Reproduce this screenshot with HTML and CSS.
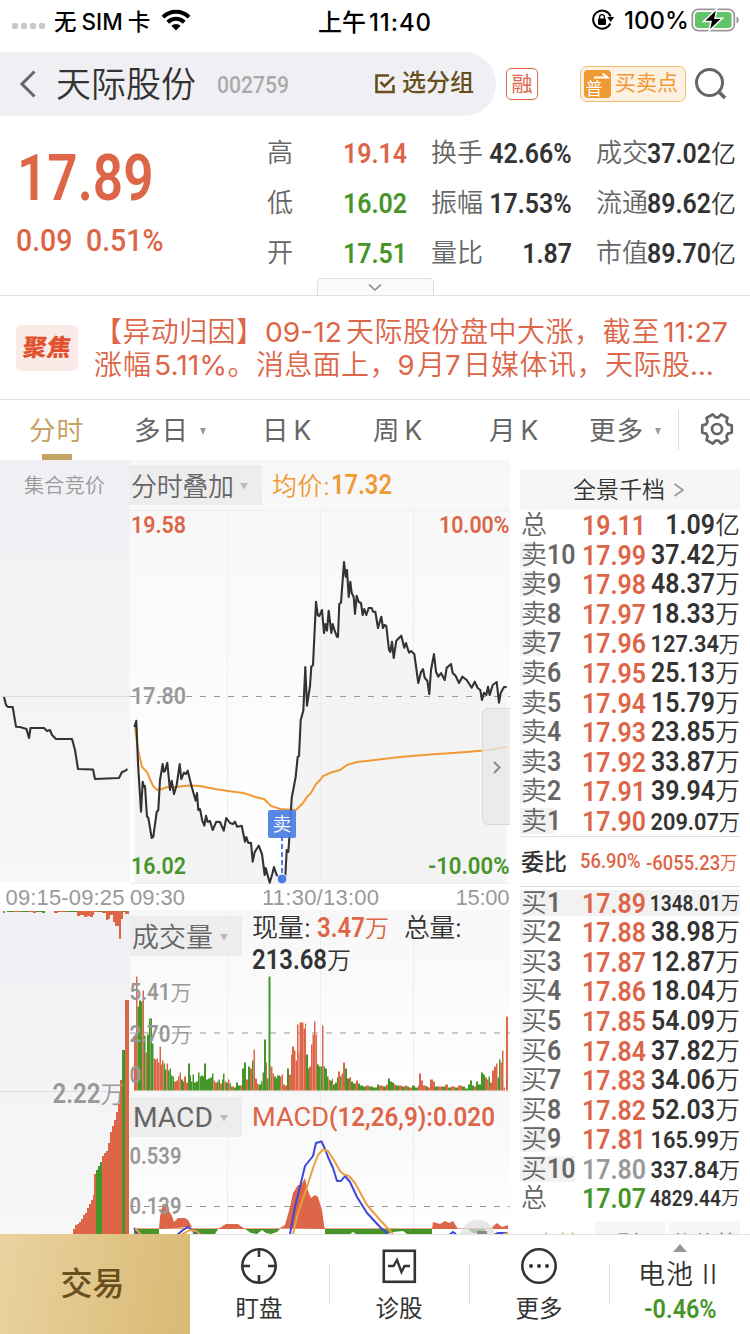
FILE: index.html
```html
<!DOCTYPE html>
<html lang="zh-CN">
<head>
<meta charset="utf-8">
<title>天际股份 002759</title>
<link rel="stylesheet" href="styles.css">
</head>
<body>
<div class="status">
  <svg class="signal" width="36" height="8" viewBox="0 0 36 8"><g fill="#c8c8c8"><rect x="1" y="1" width="6" height="6" rx="2"/><rect x="10" y="1" width="6" height="6" rx="2"/><rect x="19" y="1" width="6" height="6" rx="2"/><rect x="28" y="1" width="6" height="6" rx="2"/></g></svg>
  <span class="carrier">无<b>SIM</b>卡</span>
  <svg class="wifi" width="30" height="22" viewBox="0 0 30 22"><g fill="none" stroke="#000" stroke-width="4"><path d="M2 8.2a18.500 18.500 0 0 1 26 0"/><path d="M6.800 13.2a11.700 11.700 0 0 1 16.400 0"/></g><path d="M10.3 16.8a6.8 6.8 0 0 1 9.4 0L15 21.5z"/></svg>
  <span class="clock">上午<b>11:40</b></span>
  <svg class="rotlock" width="24" height="22" viewBox="0 0 24 22"><path d="M19.3 14.5A9 9 0 1 1 19.6 7.500" fill="none" stroke="#000" stroke-width="2"/><path d="M16.200 8h7l-3.600 5z"/><rect x="7" y="9.500" width="8" height="6.500" rx="1"/><path d="M8.600 10V8a2.400 2.400 0 0 1 4.800 0v2" fill="none" stroke="#000" stroke-width="1.400"/></svg>
  <span class="pct">100%</span>
  <svg class="battery" width="50" height="26" viewBox="0 0 50 26"><rect x="1.300" y="2.300" width="42" height="21.400" rx="6" fill="#fff" stroke="#999" stroke-width="1.800"/><rect x="4" y="5" width="36.600" height="16" rx="3.500" fill="#62c466"/><path d="M45.500 9.500c3 1 3 6 0 7z" fill="#999"/><path d="M26 1.500 12.500 14.500h7.500L18 24l13.500-12.700H24z" fill="#000" stroke="#fff" stroke-width="1.500"/></svg>
</div>

<header class="header">
  <div class="name-pill">
    <svg class="back" width="18" height="30" viewBox="0 0 18 30"><path d="M15.500 2.500 3 15l12.500 12.500" fill="none" stroke="#666" stroke-width="3"/></svg>
    <span class="name">天际股份</span>
    <span class="code"><i class="num">002759</i></span>
    <svg class="check" width="22" height="22" viewBox="0 0 22 22"><path d="M15 2.500H2.500v16.500h17V12M6.500 9l4 4.200L20 4" fill="none" stroke="#67501e" stroke-width="2.600"/></svg>
    <span class="group">选分组</span>
  </div>
  <span class="rong">融</span>
  <span class="points">
    <svg width="27" height="28" viewBox="0 0 27 28"><rect width="27" height="28" rx="4" fill="#f09a35"/><path d="M10 7.500h13.500L18.500 3.500" fill="none" stroke="#fff" stroke-width="2"/><text x="1.500" y="25" class="pu">普</text></svg>
    <span>买卖点</span>
  </span>
  <svg class="search" width="34" height="34" viewBox="0 0 34 34"><circle cx="15.500" cy="15.500" r="13" fill="none" stroke="#666" stroke-width="3"/><path d="M24.500 24.500l6.500 6.500" stroke="#666" stroke-width="3.600"/></svg>
</header>

<section class="quote">
  <div class="last">
    <div class="price"><i class="num">17.89</i></div>
    <div class="change"><i class="num">0.09</i><i class="num">0.51%</i></div>
  </div>
  <div class="stats">
    <span>高</span><em class="red"><i class="num">19.14</i></em><span>换手</span><em><i class="num">42.66%</i></em><span>成交</span><em><i class="num">37.02</i><u>亿</u></em>
    <span>低</span><em class="green"><i class="num">16.02</i></em><span>振幅</span><em><i class="num">17.53%</i></em><span>流通</span><em><i class="num">89.62</i><u>亿</u></em>
    <span>开</span><em class="green"><i class="num">17.51</i></em><span>量比</span><em><i class="num">1.87</i></em><span>市值</span><em><i class="num">89.70</i><u>亿</u></em>
  </div>
  <div class="expand"><svg width="16" height="9" viewBox="0 0 16 9"><path d="M2 1.500l6 5.500 6-5.500" fill="none" stroke="#888" stroke-width="1.600"/></svg></div>
</section>

<section class="news">
  <span class="focus"><b>聚焦</b></span>
  <div class="headline">
    <svg width="640" height="66" viewBox="95 315 640 66">
      <text x="94" y="342" textLength="170">【异动归因】</text><text class="lat" x="265" y="341.500" textLength="77" lengthAdjust="spacingAndGlyphs">09-12</text><text x="346" y="342" textLength="256">天际股份盘中大涨，</text><text x="602.500" y="342" textLength="57">截至</text><text class="lat" x="663" y="341.500" textLength="65" lengthAdjust="spacingAndGlyphs">11:27</text>
      <text x="94" y="375" textLength="57">涨幅</text><text class="lat" x="154" y="374.500" textLength="73" lengthAdjust="spacingAndGlyphs">5.11%</text><text x="227.500" y="375" textLength="170">。消息面上，</text><text class="lat" x="397.500" y="374.500">9</text><text x="417" y="375">月</text><text class="lat" x="445" y="374.500">7</text><text x="463" y="375">日</text><text x="491" y="375" textLength="199">媒体讯，天际股</text><text class="lat" x="690" y="375" textLength="27">…</text>
    </svg>
  </div>
</section>

<nav class="tabs">
  <span class="on">分时</span><span class="t2">多日<s></s></span><span class="t3">日<b>K</b></span><span class="t4">周<b>K</b></span><span class="t5">月<b>K</b></span><span class="t6">更多<s></s></span>
  <span class="gear"><svg width="36" height="36" viewBox="-18 -18 36 36"><g fill="none" stroke="#666" stroke-width="2.700" stroke-linejoin="round"><circle r="5"/><path id="cog"/></g></svg></span>
</nav>

<main class="main">
  <svg class="charts" width="510" height="774" viewBox="0 460 510 774">
    <defs>
      <linearGradient id="ga" x1="0" y1="0" x2="0" y2="1"><stop offset="0" stop-color="#f0f0f4"/><stop offset="1" stop-color="#f7f7f8"/></linearGradient>
      <linearGradient id="gb" x1="0" y1="0" x2="0" y2="1"><stop offset="0" stop-color="#f7f7f7"/><stop offset="1" stop-color="#fff"/></linearGradient>
    </defs>
    <rect x="0" y="460" width="130" height="422" fill="url(#ga)"/>
    <rect x="0" y="911" width="130" height="323" fill="url(#ga)"/>
    <rect x="130" y="460" width="380" height="423" fill="url(#gb)"/>
    <rect x="130" y="910" width="380" height="181" fill="url(#gb)"/>
    <rect x="130" y="1092" width="380" height="142" fill="url(#gb)"/>
    <path id="area" fill="#f4f4f4"/>
    <path d="M227.500 510v373m0 28v323M320.500 510v373m0 28v323M413.500 510v373m0 28v323M130 510.500h380M130 883.500h380M130 1091.500h380" stroke="#eeeeef" fill="none"/>
    <path d="M0 696.500h130M0 1091.500h130" stroke="#dedee0" fill="none"/>
    <path d="M130 696.500h380M130 1206.500h380" stroke="#999" stroke-dasharray="6 8" fill="none"/>
    <path d="M130 1033h380" stroke="#bbb" stroke-width="1.500" stroke-dasharray="6 8" fill="none"/>
    <rect x="130" y="465" width="132" height="40" fill="#ededee"/>
    <rect x="130" y="916" width="112" height="40" fill="#ededee"/>
    <rect x="130" y="1097" width="112" height="40" fill="#ededee"/>
    <path d="M240 483h8l-4 6.500zM220 934h8l-4 6.500zM220 1115h8l-4 6.500z" fill="#bbb"/>
    <g class="cjk">
      <text x="24" y="492.500" font-size="20" fill="#999" textLength="81">集合竞价</text>
      <text x="131" y="496" font-size="26" fill="#666" textLength="103">分时叠加</text>
      <text x="132" y="947" font-size="27" fill="#666" textLength="81">成交量</text>
      <text x="272" y="495" font-size="25" fill="#f09a35" textLength="58">均价:</text>
      <text x="252" y="936.500" font-size="26" fill="#333" textLength="59">现量:</text>
      <text x="404" y="936.500" font-size="26" fill="#333" textLength="58">总量:</text>
      <text x="365" y="937" font-size="24" fill="#dd6548">万</text>
      <text x="327" y="969" font-size="24" fill="#333">万</text>
    </g>

    <polyline class="line" points="4,697 6,705 8,707 12.700,707 16,726.700 20,727 26.500,729 29,738 30.500,728 44,728 47,731 50,730 52,735 56,739 72,739 75,750 78,769 93,769.500 95,779 119,778 122,772 125,771 127.500,769"/>
    <polyline class="avg" points="135,727 138,750 142,767 147,772 153,786 157,790 162,789 167,787 175,787 190,785.500 200,786 215,789 228,791 243,793 250,795 255,797 264,799 271,806 280,809 296,810 303,803 307,797 311,793 316,784 320,780 323,776 331,772.500 340,770 347,765 357,762 375,760 400,757 430,754.500 460,752.500 490,750 506.700,746.700"/>
    <polyline id="price" class="line" points="134.5,727 136.300,720.700 138,763 141,811.700 142.700,781.700 144,787 145,786 147,816.700 148.300,817.700 151.700,838 153.300,836.700 156.700,812 158.300,810 160,780 162.700,764 163.700,771.700 165,771 167.300,762.700 170,790 171.700,780.700 174,794 176.700,785 179.700,764 181.300,779 184,772.700 186,774 187.700,770.700 191.700,786.700 195.700,800.700 197,793 198.300,810 200,809 202.300,820.700 204.300,825.700 206,815.700 207.700,822 210,821 212.700,830 216.300,821.700 220,822 223.700,830.700 226.300,818 230,823 233,824 235,821.700 237,826.700 241.700,825.700 245,841.700 246.300,837 248.300,843 251,842.700 252.700,861.700 254.700,852 258.700,845.700 262,854 264.700,875 265.700,868 269.700,882.700 272.300,874 274,867 276.700,875 281.700,880 285.300,876.700 286.700,850 288.300,852 289.300,838 291.700,798 295.700,776.700 297.700,756.700 299,756 300.700,720 303.300,710.700 305.300,667 307,705.700 310,686 311.300,666.700 313,665 316,601.700 317.700,615 319.300,616 322,610 324,633 325.300,624 327,630.700 328.700,610.700 331.300,633 332.700,624 334.700,630.700 337,637 338,636.700 339.300,604 341,602.700 344,562 345.700,576.700 347,570 348.700,597 350.300,581.700 351.700,593 353.700,597 355,614 356.700,595.700 358.700,602 361,603 362.700,615 364.300,609 366.300,615 368.700,608 371.700,608 373,611.700 375.300,611.700 378,628 381.300,616.700 383,628 384.300,625 386.300,626 389,650 390.300,652 392,641.700 393.700,658 396.300,640.700 401.300,635.700 404.300,647.700 406,643 409,652.700 411,651 414.300,654 418.300,683 421,672 423,669 424.700,677.700 427.300,680.700 429.300,694 431,670 434,654 436,671.700 438.300,676.700 441,673 444.700,680 446.700,667.700 451,664 452.700,673 455.700,676 459,683 462.300,676.700 466.700,680 471.700,687.700 474.700,681.700 477.700,688 480.300,690 482,700 484,692.700 486.300,695 488,686.700 489.700,695 492.700,685 496.700,682 499,702.700 500.700,693 504,687 506.700,687"/>

    <path d="M282 836v44" stroke="#4a7ee3" stroke-width="2" stroke-dasharray="5 3"/>
    <circle cx="282" cy="879" r="5" fill="#4a7ee3" stroke="#fff"/>
    <rect x="268" y="810" width="28" height="28" rx="2" fill="#4a7ee3" opacity=".92"/>
    <text class="cjk" x="272.500" y="831" font-size="19" fill="#fff">卖</text>
    <path d="M511 708.500h-23a5.500 5.500 0 0 0-5.500 5.500v104.500a6 6 0 0 0 5.500 6h23" fill="#e8e8e8" fill-opacity=".8" stroke="#d9d9d9"/>
    <path d="M494 762l5.500 5.500-5.500 5.500" fill="none" stroke="#888" stroke-width="2"/>

    <g id="auction"></g>
    <g id="volume"></g>

    <path d="M134 1229h25v5h-25zM192 1229h26l-3 5h-22zM245 1229h35l-3 3-6 2-5-1-4-3-5 4-6-1zM325 1229h107v5h-25l-4-3-10 1-6 2h-31l-3-2-3 2h-25zM468 1229h18l-5 4h-8z" fill="#469529"/>
    <path d="M159 1229l1-12 1-5 2-7h5l1 6 3 5 2 6 4-4h7l3 2 4 7zM218 1229l8-5h12l7 5zM280 1228l5-3 5-18 3-14 5-8h3l4-7 2 10 4 10 4-3 3 2 4 13 2 15 1 4zM432 1229l1-7 7 2 5-3 4 2 4-2 5 8zM490 1229l7-6 5 4 6-2v4z" fill="#dd6548"/>
    <path d="M134 1228.500h374" stroke="#dd6548" stroke-width=".6"/>
    <circle cx="478" cy="1238" r="18" fill="#ddd" opacity=".7"/><path d="M477 1231h10v4h-10z" fill="#888"/>
    <g fill="none" stroke-width="2" stroke-linejoin="round">
      <path stroke="#3d46d8" d="M290 1234l5-27 10-41 8-10 3-13 5.500-1.500 3.500 7.500 3 8 5 11 4 13h4l4-5 5 6 7 15 10 16 13 14 8 7M134 1228l4 7M177 1235l6-5 5-3 6 4 6 4M449 1235l4-3 3 2M494 1235l4-2h9"/>
      <path stroke="#e8a040" d="M293 1234l5-21 9-26 6-19 5-13 5-5.500 5 1.500 7 11 5 9 4 3.500 5 1.500 6 7 12 22 13 15 13 14M135 1228l6 7M181 1235l9-5 6 1 5 4M502 1235l6-2"/>
    </g>

    <g class="din">
      <g font-size="24">
        <text x="131" y="533" fill="#dd6548" textLength="55" lengthAdjust="spacingAndGlyphs">19.58</text>
        <text x="439" y="533" fill="#dd6548" textLength="70.500" lengthAdjust="spacingAndGlyphs">10.00%</text>
        <text x="131" y="704" fill="#999" textLength="55" lengthAdjust="spacingAndGlyphs">17.80</text>
        <text x="131" y="874" fill="#469529" textLength="55" lengthAdjust="spacingAndGlyphs">16.02</text>
        <text x="428" y="874" fill="#469529" textLength="81.500" lengthAdjust="spacingAndGlyphs">-10.00%</text>
      </g>
      <text x="331" y="494" font-size="27" fill="#f09a35" textLength="61" lengthAdjust="spacingAndGlyphs">17.32</text>
      <text x="317" y="936.500" font-size="27" fill="#dd6548" textLength="48" lengthAdjust="spacingAndGlyphs">3.47</text>
      <text x="252" y="968.500" font-size="27" fill="#333" textLength="75" lengthAdjust="spacingAndGlyphs">213.68</text>
      <text x="252" y="1125.500" font-size="26" fill="#dd6548" class="lt" textLength="77" lengthAdjust="spacingAndGlyphs">MACD</text>
      <text x="329" y="1125.500" font-size="26" fill="#dd6548" textLength="166" lengthAdjust="spacingAndGlyphs">(12,26,9):0.020</text>
      <text x="133" y="1126.500" font-size="27" fill="#666" class="lt" textLength="80" lengthAdjust="spacingAndGlyphs">MACD</text>
      <g fill="#999" font-size="24">
        <text x="129.500" y="1000" textLength="41" lengthAdjust="spacingAndGlyphs">5.41</text>
        <text x="129.500" y="1042" textLength="41" lengthAdjust="spacingAndGlyphs">2.70</text>
        <text x="129.500" y="1083" textLength="12" lengthAdjust="spacingAndGlyphs">0</text>
        <text x="129.500" y="1163.500" textLength="52" lengthAdjust="spacingAndGlyphs">0.539</text>
        <text x="129.500" y="1213.500" textLength="52" lengthAdjust="spacingAndGlyphs">0.139</text>
        <text x="52.500" y="1103" font-size="27" textLength="48" lengthAdjust="spacingAndGlyphs">2.22</text>
      </g>
    </g>
    <g class="cjk" fill="#999"><text x="170.500" y="1000" font-size="21">万</text><text x="170.500" y="1042" font-size="21">万</text><text x="100.500" y="1103" font-size="24">万</text></g>
    <g class="axis"><text x="5.500" y="904.500" textLength="119">09:15-09:25</text><text x="130" y="904.500" textLength="55">09:30</text><text x="262" y="904.500" textLength="117">11:30/13:00</text><text x="455.500" y="904.500" textLength="54">15:00</text></g>
  </svg>

  <aside class="book">
    <div class="depth">全景千档<svg width="12" height="16" viewBox="0 0 12 16"><path d="M1.500 2l8.500 6-8.500 6" fill="none" stroke="#999" stroke-width="1.700"/></svg></div>
    <div class="rows" id="sell"></div>
    <div class="ratio"><b>委比</b><i class="num">56.90%</i><i class="num amt">-6055.23<u>万</u></i></div>
    <div class="rows" id="buy"></div>
    <div class="subtabs"><span class="sel">十档</span><span>明细</span><span>分价格</span></div>
  </aside>
</main>

<footer class="footer">
  <div class="trade">交易</div>
  <div class="item"><svg width="38" height="38" viewBox="0 0 38 38"><g fill="none" stroke="#333" stroke-width="2.600"><circle cx="19" cy="19" r="16.700"/><path d="M19 2v8M19 28v8M2 19h8M28 19h8"/></g></svg><span>盯盘</span></div>
  <div class="item"><svg width="38" height="38" viewBox="0 0 38 38"><g fill="none" stroke="#333" stroke-width="2.600"><rect x="3.800" y="3.800" width="31" height="31"/><path d="M8 19h5.500l3.500-6 4.500 12 3-6H30" stroke-width="2.400"/></g></svg><span>诊股</span></div>
  <div class="item"><svg width="38" height="38" viewBox="0 0 38 38"><circle cx="19" cy="19" r="16.700" fill="none" stroke="#333" stroke-width="2.600"/><g fill="#333"><circle cx="11" cy="19" r="2"/><circle cx="19" cy="19" r="2"/><circle cx="27" cy="19" r="2"/></g></svg><span>更多</span></div>
  <div class="item sector"><svg width="14" height="8" viewBox="0 0 14 8"><path d="M0 8L7 0l7 8z" fill="#999"/></svg><span>电池 <b>II</b></span><em class="green"><i class="num">-0.46%</i></em></div>
</footer>
<script src="app.js"></script>
</body>
</html>
```

FILE: styles.css
```css
* { box-sizing: border-box; }
body {
  margin: 0; width: 750px; height: 1334px; overflow: hidden; background: #fff;
  display: flex; flex-direction: column; color: #333;
  font-family: Inter, "Noto Sans CJK SC", sans-serif; font-weight: 350;
}
svg { display: block; flex: none; }
em, i { font-style: normal; }
u, s { text-decoration: none; }
.red { color: #dd6548; }
.green { color: #469529; }
.num { font-family: Roboto, "Noto Sans CJK SC", sans-serif; font-weight: 600; display: inline-block; flex: none; transform: scaleX(.89); transform-origin: left center; }

.status { height: 40px; flex: none; display: flex; align-items: center; color: #000; padding-left: 11px; }
.signal { margin-top: 12px; }
.carrier { margin-left: 7px; font-size: 22.5px; font-weight: 500; width: 99px; white-space: nowrap; }
.carrier b { font-weight: 450; margin: 0 5px; }
.wifi { margin-left: 8px; }
.clock { width: 114px; margin-left: 127px; font-size: 24px; font-weight: 500; white-space: nowrap; }
.clock b { font-weight: 450; margin-left: 3px; letter-spacing: .9px; }
.rotlock { margin-left: 159px; }
.pct { margin-left: 9px; width: 66px; font-size: 24px; font-weight: 450; }
.battery { margin-left: 1px; }

.header { height: 64px; margin-top: 12px; flex: none; display: flex; align-items: center; }
.name-pill { width: 496px; height: 64px; border-radius: 0 32px 32px 0; background: #f0f0f4; display: flex; align-items: center; padding-left: 19px; }
.name { margin-left: 19px; font-size: 35px; width: 141px; line-height: 62px; }
.code { margin-left: 20px; width: 78px; font-size: 24px; color: #aaa; }
.code .num { font-weight: 500; transform: scaleX(.88); }
.check { margin-left: 79px; }
.group { margin-left: 6px; font-size: 24px; font-weight: 500; color: #67501e; line-height: 60px; margin-top: -2px; }
.rong { margin-left: 10px; width: 32px; height: 32px; border: 1.5px solid #dd6548; border-radius: 5px; color: #dd6548; font-size: 21px; line-height: 30px; text-align: center; font-weight: 400; }
.points { margin-left: 42px; width: 106px; height: 36px; border: 1.5px solid #f3bc6e; border-radius: 7px; background: #fdf1e2; display: flex; align-items: center; padding-left: 3px; gap: 4px; font-size: 21px; line-height: 32px; font-weight: 400; color: #f09a35; }
.points span { margin-top: -2px; }
.pu { font-size: 17px; fill: #fff; font-weight: 400; }
.search { margin-left: 8px; }

.quote { height: 180px; flex: none; border-bottom: 1px solid #e0e0e0; display: flex; position: relative; }
.last { width: 267px; padding-left: 16px; color: #dd6548; }
.price { height: 97px; padding-top: 25px; padding-left: 1px; font-size: 64px; line-height: 72px; }
.price .num { transform: scaleX(.83); }
.change { height: 54px; line-height: 54px; display: flex; }
.change .num { width: 70px; font-size: 32px; font-weight: 500; transform: scaleX(.89); white-space: nowrap; }
.stats { display: grid; grid-template-columns: 52px 88px 52px 89px 52px 88px; grid-template-rows: repeat(3, 50px); padding-top: 12px; font-size: 26px; line-height: 50px; color: #666; white-space: nowrap; }
.stats span:nth-child(6n+3) { margin-left: 24px; }
.stats span:nth-child(6n+5) { margin-left: 48px; }
.stats em { font-size: 28px; text-align: right; }
.stats em:not(.red):not(.green) { color: #333; }
.stats em .num { transform-origin: right center; }
.stats em:nth-child(6n+4) { margin-right: -24px; }
.stats em:nth-child(6n+6) { margin-right: -48px; }
.stats u { font-size: 25px; }
.expand { position: absolute; left: 316.5px; bottom: 0; width: 117px; height: 17px; border: 1px solid #ddd; border-bottom: 0; border-radius: 5px 5px 0 0; background: #fafafa; display: flex; justify-content: center; padding-top: 4px; }

.news { height: 104px; flex: none; border-bottom: 1px solid #e0e0e0; display: flex; padding-left: 16px; align-items: center; }
.focus { width: 62px; height: 46px; margin-right: 17px; border-radius: 5px; background: #fbebe8; color: #e0512f; font-size: 24px; line-height: 45px; text-align: center; }
.focus b { font-weight: 900; display: inline-block; transform: skewX(-8deg); }
.headline text { font-size: 28px; fill: #dd6548; font-weight: 350; }
.headline .lat { font-weight: 400; font-size: 27.5px; }

.tabs { height: 60px; flex: none; display: grid; grid-template-columns: 134px 128px 111px 116px 100px 89px 72px; align-items: center; color: #666; font-size: 26.500px; line-height: 61px; letter-spacing: 1px; font-weight: 400; }
.tabs b { font-weight: 400; margin-left: 4px; }
.tabs span { height: 60px; }
.tabs .on { padding-left: 29px; color: #c5a363; background: linear-gradient(#c5a363, #c5a363) 42px 54px / 30px 6px no-repeat; }
.tabs s { display: inline-block; margin-left: 11px; vertical-align: 5px; border: 3.5px solid transparent; border-top: 7px solid #999; border-bottom: 0; }
.tabs .gear { padding: 11px 0 0 21px; background: linear-gradient(#ddd, #ddd) 0 10px / 1px 40px no-repeat; }

.main { height: 774px; flex: none; display: flex; overflow: hidden; }
.charts text { font-weight: 350; }
.charts .din text { font-family: Roboto, sans-serif; font-weight: 600; }
.charts .din .lt { font-weight: 400; }
.charts .axis text { font-family: "Liberation Sans", Arial, sans-serif; font-weight: 400; font-size: 22px; fill: #999; }
.line { fill: none; stroke: #333; stroke-width: 2.1; stroke-linejoin: round; }
.avg { fill: none; stroke: #f09a35; stroke-width: 2; }

.book { width: 220px; margin-left: 10px; padding-top: 10px; }
.depth { height: 40px; background: #f6f6f7; font-size: 23px; line-height: 42px; display: flex; justify-content: center; align-items: center; gap: 8px; padding-right: 2px; }
.row { height: 29.6px; display: flex; line-height: 30.6px; font-size: 28px; background: linear-gradient(#f2f2f3, #f2f2f3) 0 2px no-repeat; white-space: nowrap; }
.row .lv { width: 62px; flex: none; padding-left: 1px; color: #666; font-size: 26px; display: flex; }
.row .lv .num { font-size: 28px; }
.row .pr { width: 65px; flex: none; }
.row .vol { width: 93px; flex: none; display: flex; justify-content: flex-end; }
.row .vol .num { transform-origin: right center; }
.row .vol u { font-size: .88em; }
.ratio { height: 51px; margin-bottom: 1px; border-top: 1px solid #ddd; border-bottom: 1px solid #ddd; display: flex; align-items: center; color: #dd6548; font-size: 20px; white-space: nowrap; }
.ratio b { font-weight: 500; font-size: 23px; color: #333; width: 60px; padding-left: 1px; margin-top: -2px; }
.ratio .num { width: 66px; transform: scaleX(.92); font-weight: 500; }
.ratio .amt { width: 90px; }
.ratio u { font-weight: 350; font-size: 19px; }
.subtabs { display: grid; grid-template-columns: 75px 70px 71px; text-align: center; height: 46px; margin-top: 9px; font-size: 23px; line-height: 45px; color: #666; }
.subtabs span { background: #f6f6f7; }
.subtabs span:last-child { margin-left: 4px; margin-right: -4px; }
.subtabs .sel { background: none; color: #c5a363; }

.footer { height: 100px; flex: none; display: flex; background: #fff; }
.trade { width: 190px; background: linear-gradient(100deg, #ead3a0, #d9b973); color: #67501e; font-size: 32px; font-weight: 500; text-align: center; line-height: 100px; padding-right: 5px; }
.item { width: 140px; border-top: 1px solid #e0e0e0; padding: 12px 2px 0 0; display: flex; flex-direction: column; align-items: center; font-size: 23.5px; line-height: 34px; background: linear-gradient(#ddd, #ddd) right 29px / 1px 40px no-repeat; font-weight: 400; }
.item span { margin-top: 7px; white-space: nowrap; }
.sector { background: none; padding-top: 9px; padding-right: 4px; font-weight: 350; }
.sector svg { margin-left: 4px; }
.sector span { font-size: 27px; line-height: 34px; margin-top: 6px; letter-spacing: .8px; }
.sector b { font-weight: 350; }
.sector em { font-size: 26px; line-height: 34px; margin-top: 0; margin-left: 4px; }
.sector .num { transform-origin: center; transform: scaleX(.9); }
```

FILE: app.js
```js
const RED = '#dd6548', GREEN = '#469529';
const $ = id => document.getElementById(id);

// Volume bars: x, height, colour; each bar extends to the next x.
const volume = '134r54 136r114 137.5g84 139g90 141g89 142.5r100 144g55 145.5r38 147g56 149g72 150.5g72 152g47 153.5r32 155r31 156.5r32 158r28 159.5r44 161r26 162r30 163.5g27 165g21 166.5r27 168g20 169.5g22 171g15 172.5g14 174r9 176r10 178r14 179.5r18 181g11 183g9 184r14 186r8 188g27 190g15 191g9 192.5g16 194g8 196g9 198g18 199.5g14 201g15 203g14 204g27 206g11 208g12 210g13 212g17 213.5r10 215r8 217g9 218.5g11 220r7 222g11 223g17 224.5r9 226g8 228r11 229.5g7 231r4 234g3 236g8 238g5 240r5 242g22 244g28 246r11 248g24 250r22 252g30 253.5r41 255r12 257r7 258.5g6 261g9 262.5g18 264g51 266r28 267g12 268.5g114 270.5r24 272.5r17 274g14 276g12 277g15 280r14 281.5r16 283r6 285r5 287g22 289r16 291r36 292r44 294r40 295.5r30 297r66 298.5r38 299.5r68 302r68 303.5r62 305r67 306g36 308g22 309r24 311r46 312.5r56 314r69 315.5r56 317g26 319g24 320.5g24 322r65 323.5g24 325g22 327g14 328.5r11 330g10 332r12 333g6 335g8 337g13 338r19 340g14 341.5r17 343r28 345g22 347g12 349r13 351g9 353g7 355r7 356r10 358g7 360g5 363g4 366r5 369g4 373g3 377g6 379r5 383g4 386r6 388g12 390g9 392g8 394r6 396g5 399r5 402g4 405r5 407g4 409r3 412g5 415g3 418r5 419r17 421r10 423r5 426g4 428r3 430r11 433r9 435g4 438r4 442g4 445r6 448g3 451r4 455g3 458r5 462g4 465g2 468g6 470g10 472g5 474r4 476g9 478g6 481g18 483g16 485r13 487r11 488.5g14 490r8 492r20 494r24 496r27 497.5g13 499g31 500.5r28 502r40 503.5r3 505r0 506r74 508r0';
const auction = '73r5 75r9 77r10 79r12 81r15 83r19 85r21 87r26 89r30 91r34 93r39 94r60 96g64 98g68 100g72 102r78 104r81 106r83 108r91 110r102 112r108 114r114 116r122 118r130 120r154 122g184 125r234 129r0';
const topBars = '3r2 5r0 7g1 14r1 21g1 28r1 33r2 36g1 42g2 45r0 54r2 58r1 66g1 77r5 80r4 84r6 87r5 90r6 93r4 94r1 98g1 102r2 106r9 108r8 110r4 113r11 115r15 117r15 119r28 121r8 123g1 125r3 129r0';

function bars(spec, base, down) {
  const d = spec.split(' ').map(s => s.match(/([\d.]+)([rg])([\d.]+)/).slice(1));
  return d.slice(0, -1).map(([x, c, h], i) =>
    `<rect x="${x}" y="${down ? base : base - h}" width="${d[i + 1][0] - x}" height="${h}" fill="${c === 'r' ? RED : GREEN}"/>`
  ).join('');
}
$('volume').innerHTML = bars(volume, 1090.5);
$('auction').innerHTML = bars(auction, 1234) + bars(topBars, 911, true);
$('area').setAttribute('d', 'M134.5 883L' + $('price').getAttribute('points') + ' 506.7 883Z');

// Six-toothed settings cog outline.
let cog = '';
for (let i = 0; i < 6; i++) {
  [[-.4, 11.8], [-.24, 15.2], [.24, 15.2], [.4, 11.8]].forEach(([a, r]) => {
    const t = i * Math.PI / 3 + a;
    cog += (cog ? 'L' : 'M') + (r * Math.cos(t)).toFixed(2) + ' ' + (r * Math.sin(t)).toFixed(2);
  });
}
$('cog').setAttribute('d', cog + 'Z');

// Order book rows: side, level, price, volume, unit, bar width, price colour.
const sell = [['总', '', '19.11', '1.09', '亿', 0], ['卖', 10, '17.99', '37.42', '万', 12], ['卖', 9, '17.98', '48.37', '万', 15], ['卖', 8, '17.97', '18.33', '万', 4], ['卖', 7, '17.96', '127.34', '万', 22], ['卖', 6, '17.95', '25.13', '万', 7], ['卖', 5, '17.94', '15.79', '万', 3], ['卖', 4, '17.93', '23.85', '万', 6], ['卖', 3, '17.92', '33.87', '万', 8], ['卖', 2, '17.91', '39.94', '万', 6], ['卖', 1, '17.90', '209.07', '万', 34]];
const buy = [['买', 1, '17.89', '1348.01', '万', 220], ['买', 2, '17.88', '38.98', '万', 7], ['买', 3, '17.87', '12.87', '万', 2], ['买', 4, '17.86', '18.04', '万', 3], ['买', 5, '17.85', '54.09', '万', 9], ['买', 6, '17.84', '37.82', '万', 6], ['买', 7, '17.83', '34.06', '万', 5], ['买', 8, '17.82', '52.03', '万', 9], ['买', 9, '17.81', '165.99', '万', 27], ['买', 10, '17.80', '337.84', '万', 55, '#999'], ['总', '', '17.07', '4829.44', '万', 0, GREEN]];
const sizes = { 6: 24.5, 7: 21.5 };
const row = ([s, n, p, v, u, w, c]) => `<div class="row" style="background-size:${w}px 26px"><span class="lv">${s}<i class="num">${n}</i></span><span class="pr" style="color:${c || RED}"><i class="num">${p}</i></span><span class="vol" style="font-size:${sizes[v.length] || 28}px;padding-top:${v.length > 5 ? 1 : 0}px"><i class="num">${v}</i><u>${u}</u></span></div>`;
$('sell').innerHTML = sell.map(row).join('');
$('buy').innerHTML = buy.map(row).join('');
```
